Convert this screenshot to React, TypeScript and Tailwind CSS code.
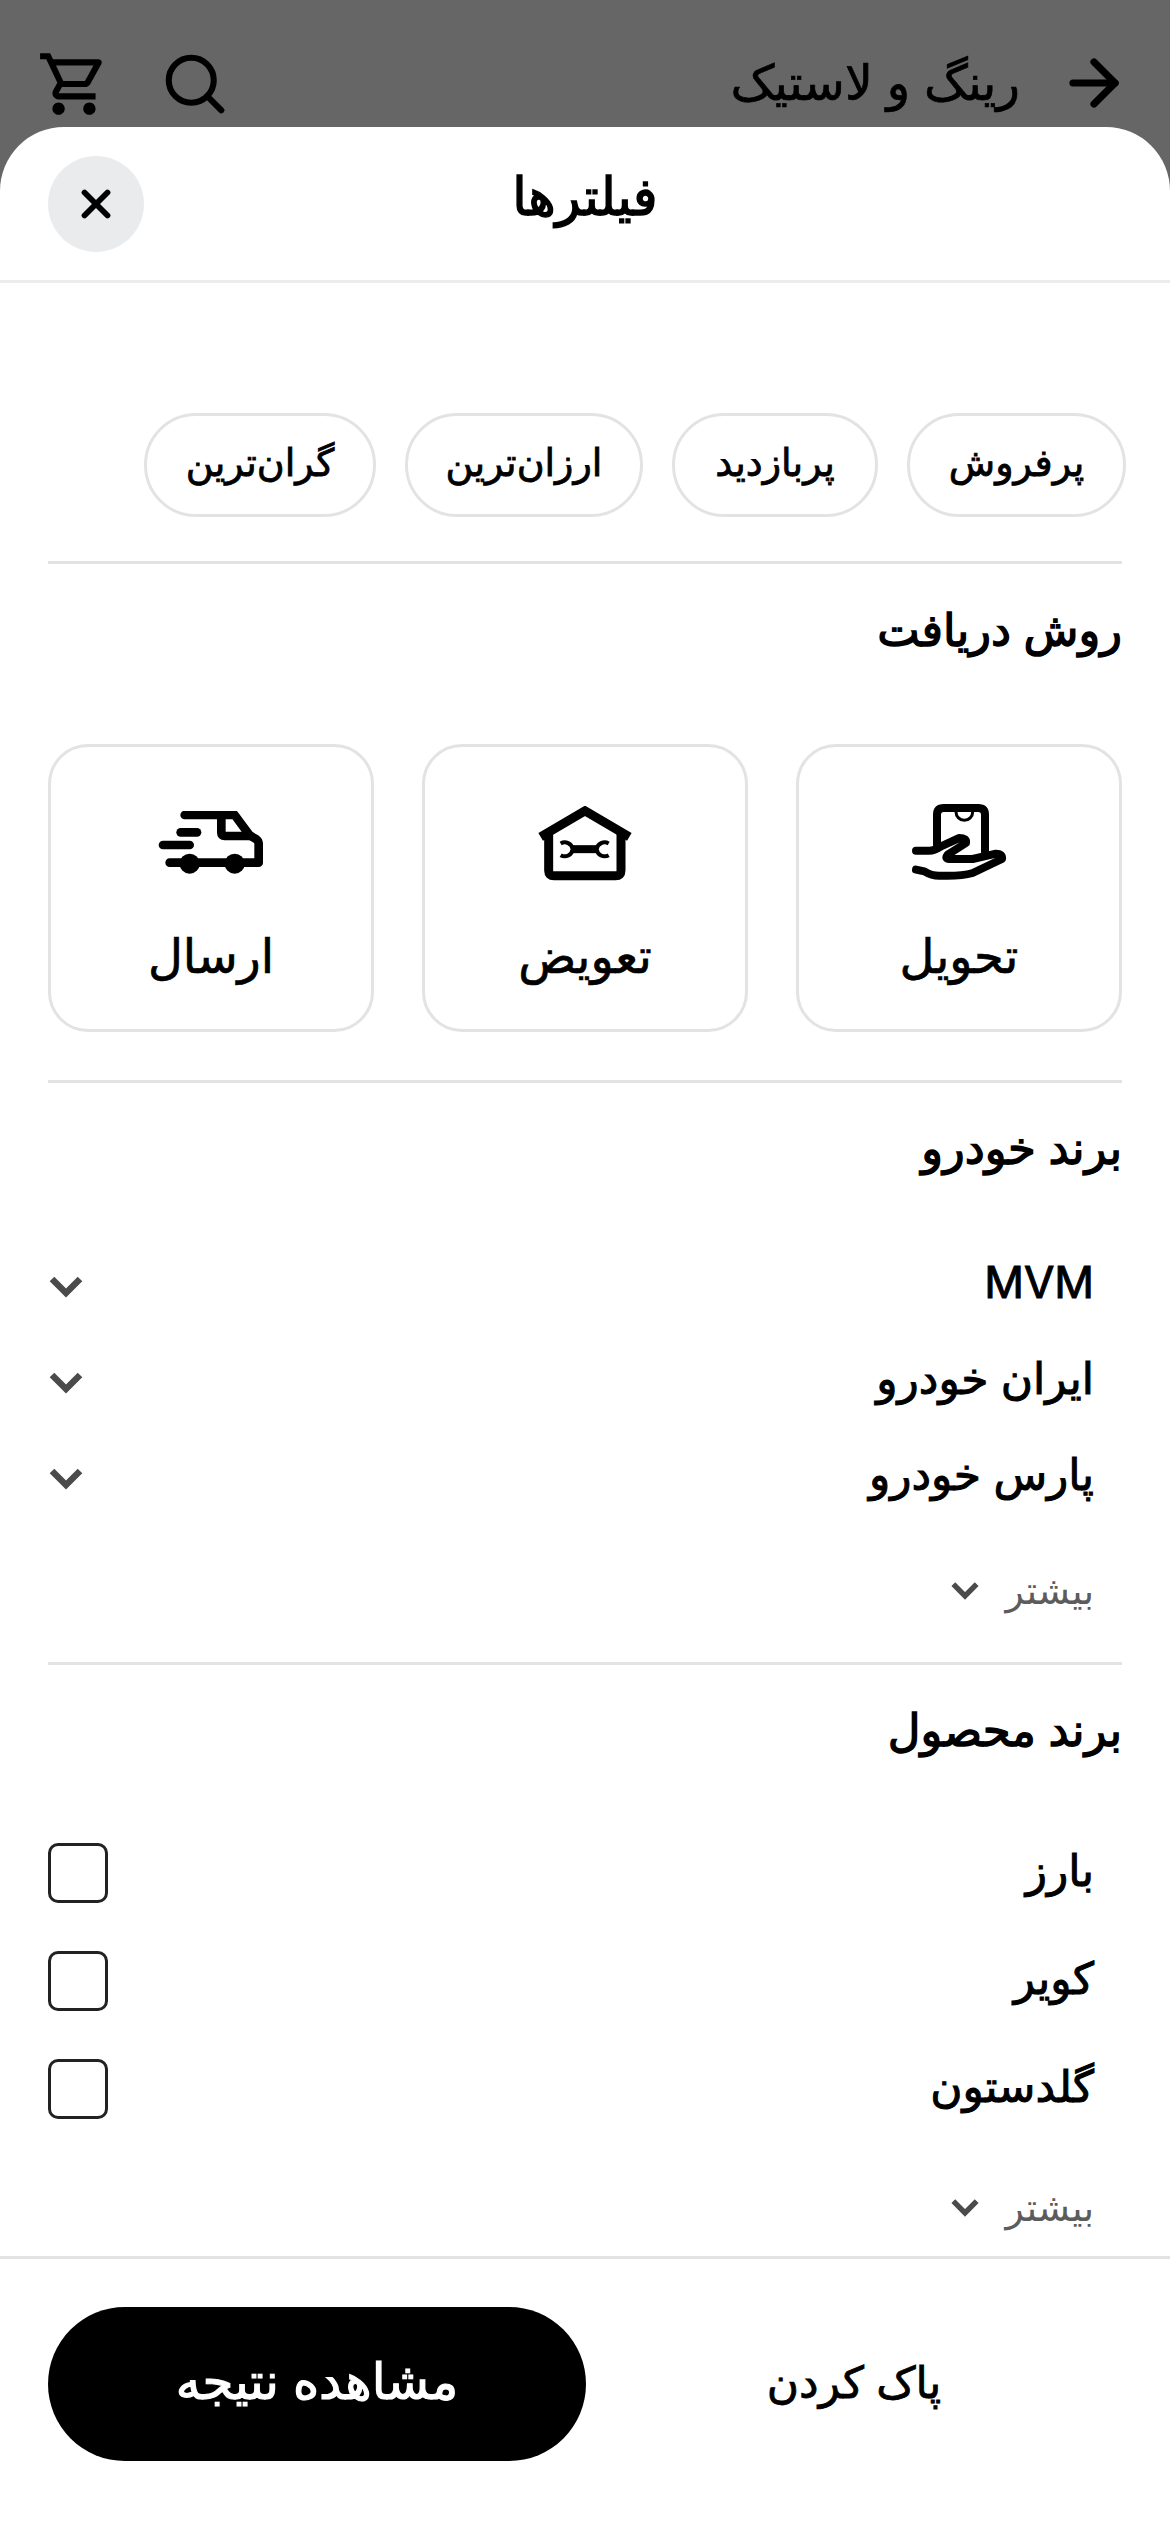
import React from 'react';
import { ArrowRight, X } from 'lucide-react';

const font = "font-['Inter','Noto_Sans','DejaVu_Sans',sans-serif]";

function Chevron({ size = 36, className = '' }: { size?: number; className?: string }) {
  return (
    <svg width={size} height={size} viewBox="0 0 36 36" className={className}>
      <path d="M4 11 L18 25 L32 11" fill="none" stroke="#4b4b4b" strokeWidth="6.5" />
    </svg>
  );
}

function TruckIcon() {
  return (
    <svg width="106" height="64" viewBox="90 85 318 192" fill="none" stroke="#000" strokeWidth="26" strokeLinecap="round" strokeLinejoin="round" className="mb-[6px]">
      <path d="M170 97 H320 L365 158 L385 170 Q392 175 392 185 V240 H125" />
      <path d="M280 100 V150 Q280 160 290 160 H365" />
      <path d="M158 149 H207" />
      <path d="M105 187 H185" />
      <circle cx="185" cy="243" r="30" fill="#000" stroke="none" />
      <circle cx="320" cy="243" r="30" fill="#000" stroke="none" />
    </svg>
  );
}

function GarageIcon() {
  return (
    <svg width="94" height="75" viewBox="90 72 282 224" fill="none" stroke="#000">
      <path d="M98 164 L231 86 L364 164" strokeWidth="27" />
      <path d="M122 150 V265 Q122 281 138 281 H323 Q339 281 339 265 V150" strokeWidth="27" />
      <path d="M190 201 H270" strokeWidth="24" />
      <path d="M158 184 A 24 24 0 0 1 194 201 A 24 24 0 0 1 158 219" strokeWidth="12" />
      <path d="M302 184 A 24 24 0 0 0 266 201 A 24 24 0 0 0 302 219" strokeWidth="12" />
    </svg>
  );
}

function HandIcon() {
  return (
    <svg width="96" height="78" viewBox="70 70 288 234" fill="none" stroke="#000" strokeWidth="24" strokeLinecap="round" strokeLinejoin="round">
      <path d="M148 195 V105 Q148 85 168 85 H272 Q292 85 292 105 V225" />
      <path d="M205 97 A 25 25 0 0 0 255 97" strokeWidth="9" />
      <path d="M85 213 H125 Q140 213 160 200 L215 175 Q238 175 235 190 L180 225 Q170 238 185 238 L255 238 L325 222 Q345 222 343 238 L255 280 Q220 290 160 288 Q135 290 110 275 L85 270" />
    </svg>
  );
}

function Cart() {
  return (
    <svg width="74" height="74" viewBox="0 0 24 24" fill="#000">
      <path d="M15.55 13c.75 0 1.41-.41 1.75-1.03l3.58-6.49A.996.996 0 0 0 20.01 4H5.21l-.94-2H1v2h2l3.6 7.59-1.35 2.44C4.52 15.37 5.48 17 7 17h12v-2H7l1.1-2h7.45zM6.16 6h12.15l-2.76 5H8.53L6.16 6zM7 18c-1.1 0-1.99.9-1.99 2S5.9 22 7 22s2-.9 2-2-.9-2-2-2zm10 0c-1.1 0-1.99.9-1.99 2s.89 2 1.99 2 2-.9 2-2-.9-2-2-2z" />
    </svg>
  );
}

function Search() {
  return (
    <svg width="60" height="60" viewBox="0 0 64 64" fill="none" stroke="#000" strokeWidth="6.5">
      <circle cx="28" cy="28" r="24" />
      <path d="M45 45 L60 60" strokeLinecap="round" />
    </svg>
  );
}

function Divider() {
  return <div className="mx-12 h-[3px] bg-[#e3e3e3]" />;
}

function More({ className = '' }: { className?: string }) {
  return (
    <div className={`flex items-center gap-[26px] pr-[28px] text-[38px] text-[#5c5c5c] ${className}`}>
      <span>بیشتر</span>
      <Chevron size={30} />
    </div>
  );
}

function Chip({ label, w }: { label: string; w: string }) {
  return (
    <div className={`flex h-[104px] items-center justify-center rounded-full border-[3px] border-[#e3e3e3] pb-[5px] text-[38px] [-webkit-text-stroke:0.8px] ${w}`}>
      {label}
    </div>
  );
}

function DeliveryCard({ label, icon }: { label: string; icon: React.ReactNode }) {
  return (
    <div className="flex h-[288px] w-[326px] flex-col items-center rounded-[40px] border-[3px] border-[#e3e3e3]">
      <div className="flex h-[138px] items-end pb-[4px]">{icon}</div>
      <div className="mt-[41px] text-[48px] leading-[60px] [-webkit-text-stroke:0.7px]">{label}</div>
    </div>
  );
}

const carBrands = ['MVM', 'ایران خودرو', 'پارس خودرو'];
const productBrands = ['بارز', 'کویر', 'گلدستون'];

export default function App() {
  return (
    <div dir="rtl" className={`flex h-[2532px] w-[1170px] flex-col overflow-hidden bg-[#666666] text-black ${font}`}>
      <div className="flex h-[127px] shrink-0 items-start justify-between pt-[47px] pl-[37px] pr-[40px]">
        <div className="flex items-center gap-[38px]">
          <ArrowRight size={72} strokeWidth={2.4} color="#000" />
          <span className="text-[49px] leading-[60px] [-webkit-text-stroke:0.7px]">رینگ و لاستیک</span>
        </div>
        <div className="flex items-center gap-[54px]">
          <Search />
          <Cart />
        </div>
      </div>

      <div className="flex min-h-0 flex-1 flex-col rounded-t-[64px] bg-white">
        <div className="relative flex h-[156px] shrink-0 items-center justify-center border-b-[3px] border-[#ececec] pb-[14px]">
          <span className="text-[52px] leading-[70px] [-webkit-text-stroke:1.5px]">فیلترها</span>
          <div className="absolute left-12 top-[29px] flex h-24 w-24 items-center justify-center rounded-full bg-[#e9ebec]">
            <X size={46} strokeWidth={3} color="#000" />
          </div>
        </div>

        <div className="flex-1 overflow-hidden">
          <div className="flex gap-[29px] pt-[130px] pb-[44px] pr-[44px]">
            <Chip label="پرفروش" w="w-[219px]" />
            <Chip label="پربازدید" w="w-[206px]" />
            <Chip label="ارزان‌ترین" w="w-[238px]" />
            <Chip label="گران‌ترین" w="w-[232px]" />
          </div>
          <Divider />

          <h2 className="mx-12 mt-[34px] text-[45px] leading-[64px] [-webkit-text-stroke:1.4px]">روش دریافت</h2>
          <div className="mx-12 mt-[82px] mb-[48px] flex justify-between">
            <DeliveryCard label="تحویل" icon={<HandIcon />} />
            <DeliveryCard label="تعویض" icon={<GarageIcon />} />
            <DeliveryCard label="ارسال" icon={<TruckIcon />} />
          </div>
          <Divider />

          <h2 className="mx-12 mt-[33px] text-[45px] leading-[64px] [-webkit-text-stroke:1.4px]">برند خودرو</h2>
          <div className="mt-[58px] flex flex-col">
            {carBrands.map((name) => (
              <div key={name} className="mx-12 flex h-24 items-center justify-between pr-[28px] text-[44px] [-webkit-text-stroke:1px]">
                <span className="pb-[8px]">{name}</span>
                <Chevron />
              </div>
            ))}
          </div>
          <More className="mx-12 mt-[30px] h-[68px]" />
          <div className="mt-[38px]"><Divider /></div>

          <h2 className="mx-12 mt-[33px] text-[45px] leading-[64px] [-webkit-text-stroke:1.4px]">برند محصول</h2>
          <div className="mt-[81px] flex flex-col gap-[48px]">
            {productBrands.map((name) => (
              <div key={name} className="mx-12 flex h-[60px] items-center justify-between pr-[28px] text-[44px] [-webkit-text-stroke:1px]">
                <span className="pb-[6px]">{name}</span>
                <div className="h-[60px] w-[60px] rounded-[10px] border-[3px] border-[#222]" />
              </div>
            ))}
          </div>
          <More className="mx-12 mt-[54px] h-[68px]" />
        </div>

        <div className="flex h-[276px] shrink-0 items-start border-t-[3px] border-[#e3e3e3] px-12 pt-[48px]">
          <div className="flex h-[154px] flex-1 items-center justify-center pb-[5px] text-[44px] [-webkit-text-stroke:0.8px]">پاک کردن</div>
          <div className="flex h-[154px] w-[538px] items-center justify-center rounded-full bg-black pb-[5px] text-[50px] text-white [-webkit-text-stroke:1.2px]">
            مشاهده نتیجه
          </div>
        </div>
      </div>
    </div>
  );
}
